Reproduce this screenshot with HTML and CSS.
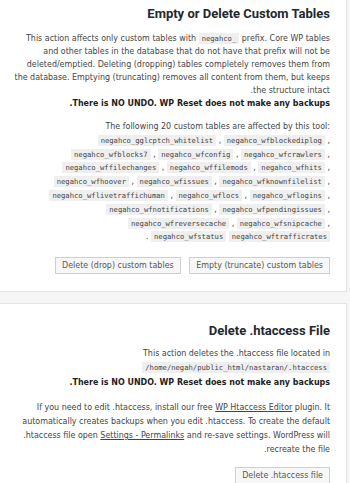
FILE: index.html
```html
<!DOCTYPE html>
<html>
<head>
    <link rel="stylesheet" href="styles.css">
</head>
<body>
    <div class="page">
        <div class="card card-first">
            <h2>Empty or Delete Custom Tables</h2>
            <p class="intro">
                This action affects only custom tables with <code>negahco_</code> prefix. Core WP tables<br>
                and other tables in the database that do not have that prefix will not be<br>
                deleted/emptied. Deleting (dropping) tables completely removes them from<br>
                the database. Emptying (truncating) removes all content from them, but keeps<br>
                .the structure intact<br>
                <b>.There is NO UNDO. WP Reset does not make any backups</b>
            </p>
            <div class="tables">
                <div class="line">The following 20 custom tables are affected by this tool:</div>
                <div class="line"><code>negahco_gglcptch_whitelist</code> , <code>negahco_wfblockediplog</code> ,</div>
                <div class="line"><code>negahco_wfblocks7</code> , <code>negahco_wfconfig</code> , <code>negahco_wfcrawlers</code> ,</div>
                <div class="line"><code>negahco_wffilechanges</code> , <code>negahco_wffilemods</code> , <code>negahco_wfhits</code> ,</div>
                <div class="line"><code>negahco_wfhoover</code> , <code>negahco_wfissues</code> , <code>negahco_wfknownfilelist</code> ,</div>
                <div class="line"><code>negahco_wflivetraffichuman</code> , <code>negahco_wflocs</code> , <code>negahco_wflogins</code> ,</div>
                <div class="line"><code>negahco_wfnotifications</code> , <code>negahco_wfpendingissues</code> ,</div>
                <div class="line"><code>negahco_wfreversecache</code> , <code>negahco_wfsnipcache</code> ,</div>
                <div class="line">. <code>negahco_wfstatus</code> <code>negahco_wftrafficrates</code></div>
            </div>
            <div class="actions">
                <button>Delete (drop) custom tables</button>
                <button>Empty (truncate) custom tables</button>
            </div>
        </div>

        <div class="card card-htaccess">
            <h2>Delete .htaccess File</h2>
            <p>
                This action deletes the .htaccess file located in<br>
                <code>/home/negah/public_html/nastaran/.htaccess</code><br>
                <b>.There is NO UNDO. WP Reset does not make any backups</b>
            </p>
            <p>
                If you need to edit .htaccess, install our free <a href="#">WP Htaccess Editor</a> plugin. It<br>
                automatically creates backups when you edit .htaccess. To create the default<br>
                .htaccess file open <a href="#">Settings - Permalinks</a> and re-save settings. WordPress will<br>
                .recreate the file
            </p>
            <div class="actions">
                <button>Delete .htaccess file</button>
            </div>
        </div>
    </div>
</body>
</html>
```

FILE: styles.css
```css
body {
    margin: 0;
    background: #f5f5f5;
    font-family: "DejaVu Sans Condensed", "DejaVu Sans", sans-serif;
    font-size: 8.85px;
    color: #444;
}
.page {
    padding-right: 3px;
}
.card {
    margin-left: -1px;
    padding: 1px 16px 17px 10px;
    background: #fff;
    border: 1px solid #e4e4e4;
    text-align: right;
    white-space: nowrap;
}
.card-first {
    border-top: none;
}
.card + .card {
    margin-top: 11px;
}
h2 {
    margin: 5px 0 11px;
    font-family: Roboto, sans-serif;
    font-size: 13px;
    font-weight: 700;
    line-height: 15px;
    color: #23282d;
}
p {
    margin: 0 0 10px;
    line-height: 13px;
}
b {
    color: #222;
}
a {
    color: #444;
}
code {
    font-family: "DejaVu Sans Mono", monospace;
    font-size: 7.2px;
    padding: 1px 3px;
    background: #efefef;
}
.tables {
    line-height: 13.8px;
}
.actions {
    margin-top: 13px;
}
button {
    margin-left: 6px;
    padding: 2px 6px;
    font-family: inherit;
    font-size: 8.85px;
    line-height: 11px;
    color: #555;
    background: #f7f7f7;
    border: 1px solid #cfcfcf;
    border-radius: 0;
}
.card-htaccess h2 {
    margin: 18px 0 8px;
}
.card-htaccess p {
    line-height: 14px;
    margin-bottom: 11px;
}
.card-htaccess .actions {
    margin-top: 7px;
}
```
